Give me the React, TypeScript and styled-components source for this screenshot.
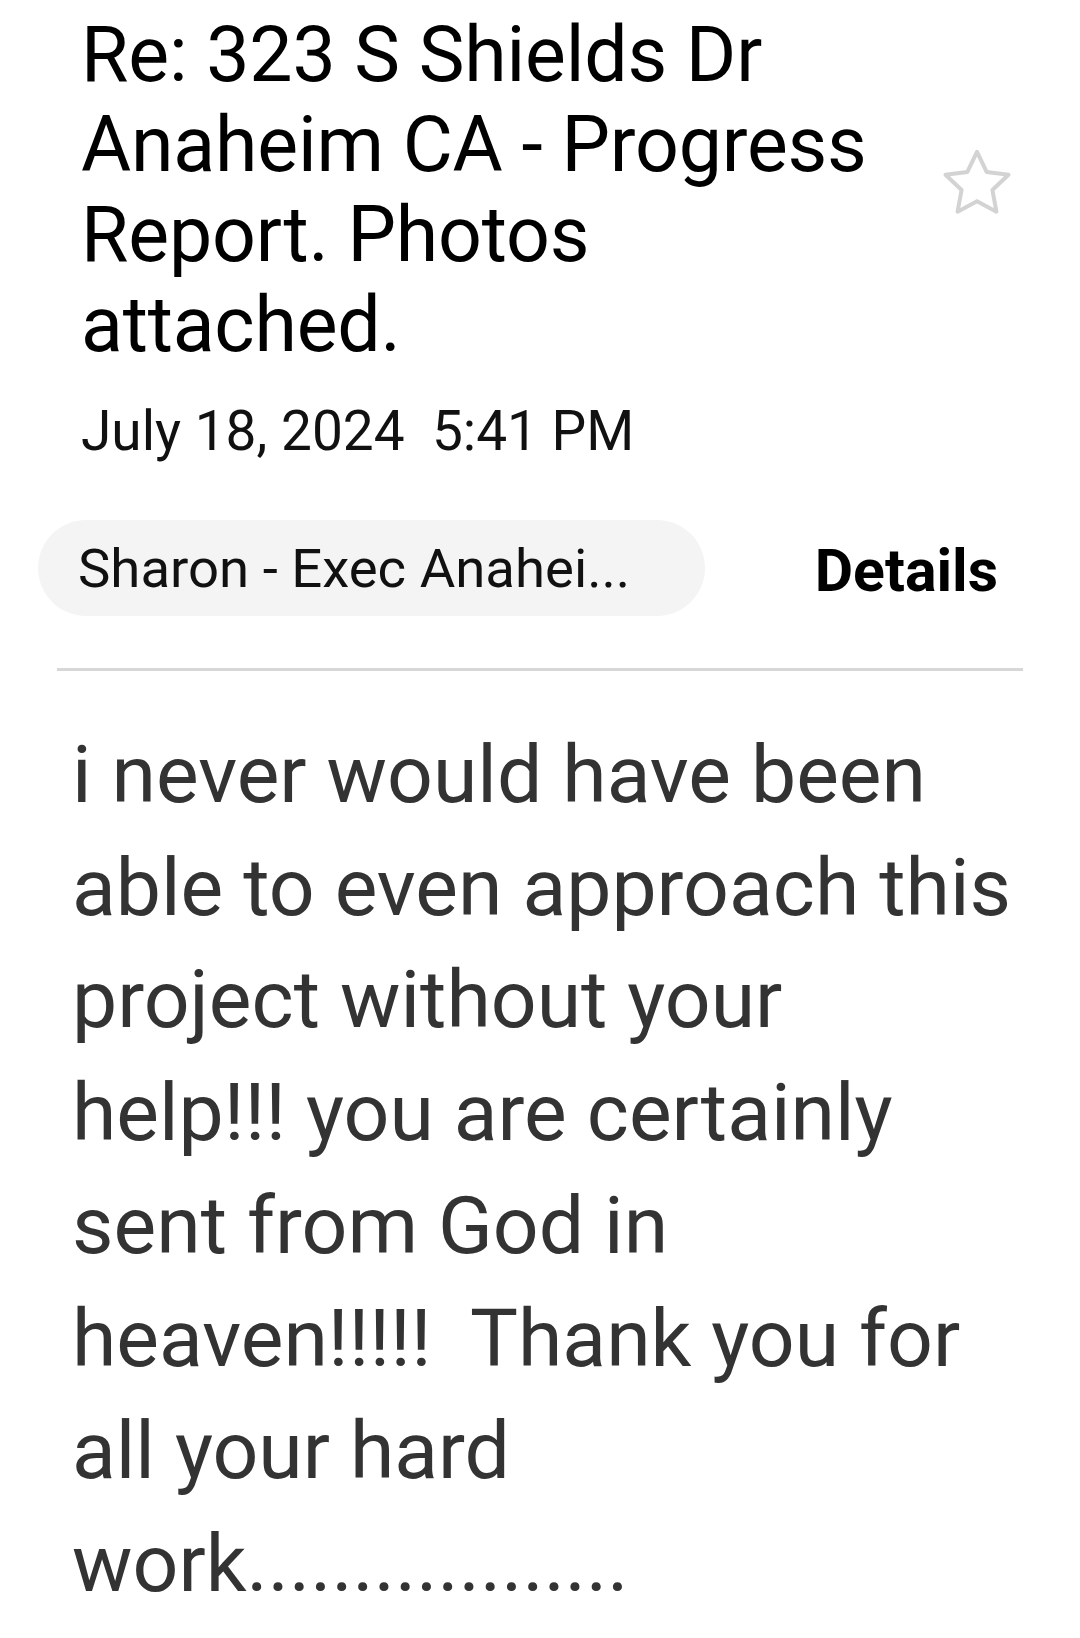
import React from 'react';
import styled, {createGlobalStyle} from 'styled-components';

const GlobalStyle = createGlobalStyle`
    html, body {
        margin: 0;
        padding: 0;
        background: #ffffff;
    }
    body {
        font-family: Roboto, 'Noto Sans', 'Liberation Sans', sans-serif;
        -webkit-font-smoothing: antialiased;
    }
`;

const bodyLines = [
    'i never would have been',
    'able to even approach this',
    'project without your',
    'help!!! you are certainly',
    'sent from God in',
    'heaven!!!!!  Thank you for',
    'all your hard',
    'work..................',
];

const StarIcon = () => (
    <svg
        width='84'
        height='84'
        viewBox='0 0 24 24'
        fill='none'
        stroke='#d3d3d3'
        strokeWidth='1.15'
        strokeLinejoin='round'
        strokeLinecap='round'
    >
        <path d='M12 2.8l2.75 5.75 6.25.8-4.6 4.35 1.15 6.2L12 16.9l-5.55 3l1.15-6.2L3 9.35l6.25-.8z'/>
    </svg>
);

export default function App() {
    return (
        <Page>
            <GlobalStyle/>
            <Header>
                <TitleRow>
                    <Subject>
                        Re: 323 S Shields Dr Anaheim CA - Progress Report. Photos attached.
                    </Subject>
                    <StarButton aria-label='Star'>
                        <StarIcon/>
                    </StarButton>
                </TitleRow>
                <SentDate>July 18, 2024&nbsp; 5:41 PM</SentDate>
            </Header>
            <SenderRow>
                <SenderChip>
                    <SenderName>Sharon - Exec Anahei...</SenderName>
                </SenderChip>
                <DetailsLink>Details</DetailsLink>
            </SenderRow>
            <Divider/>
            <MessageBody>
                {bodyLines.map((line) => (
                    <BodyLine key={line}>{line}</BodyLine>
                ))}
            </MessageBody>
        </Page>
    );
}

const Page = styled.div`
    width: 1080px;
    min-height: 1638px;
    box-sizing: border-box;
    padding: 10px 0 0 0;
    background: #ffffff;
    display: flex;
    flex-direction: column;
`;

const Header = styled.div`
    display: flex;
    flex-direction: column;
    padding: 0 0 0 81px;
`;

const TitleRow = styled.div`
    display: flex;
    align-items: center;
    justify-content: space-between;
`;

const Subject = styled.h1`
    margin: 0;
    width: 820px;
    font-size: 77px;
    line-height: 90px;
    font-weight: 400;
    color: #000000;
    letter-spacing: -0.2px;
`;

const StarButton = styled.div`
    display: flex;
    align-items: center;
    justify-content: center;
    width: 84px;
    height: 84px;
    margin: 0 61px 12px 0;
`;

const SentDate = styled.div`
    margin-top: 31px;
    font-size: 55px;
    line-height: 60px;
    color: #111111;
`;

const SenderRow = styled.div`
    display: flex;
    align-items: center;
    justify-content: space-between;
    margin-top: 59px;
    padding: 0 82px 0 38px;
`;

const SenderChip = styled.div`
    display: flex;
    align-items: center;
    width: 667px;
    height: 96px;
    box-sizing: border-box;
    padding: 0 0 0 40px;
    border-radius: 48px;
    background: #f4f4f4;
`;

const SenderName = styled.span`
    font-size: 54.5px;
    line-height: 64px;
    color: #111111;
    white-space: nowrap;
`;

const DetailsLink = styled.span`
    font-size: 59px;
    line-height: 64px;
    font-weight: 700;
    color: #000000;
    margin-top: 6px;
`;

const Divider = styled.div`
    height: 3px;
    margin: 52px 57px 0 57px;
    background: #d7d7d7;
`;

const MessageBody = styled.div`
    display: flex;
    flex-direction: column;
    padding: 48px 0 0 72px;
`;

const BodyLine = styled.div`
    font-size: 80.5px;
    line-height: 112.7px;
    color: #333333;
    white-space: pre;
`;
